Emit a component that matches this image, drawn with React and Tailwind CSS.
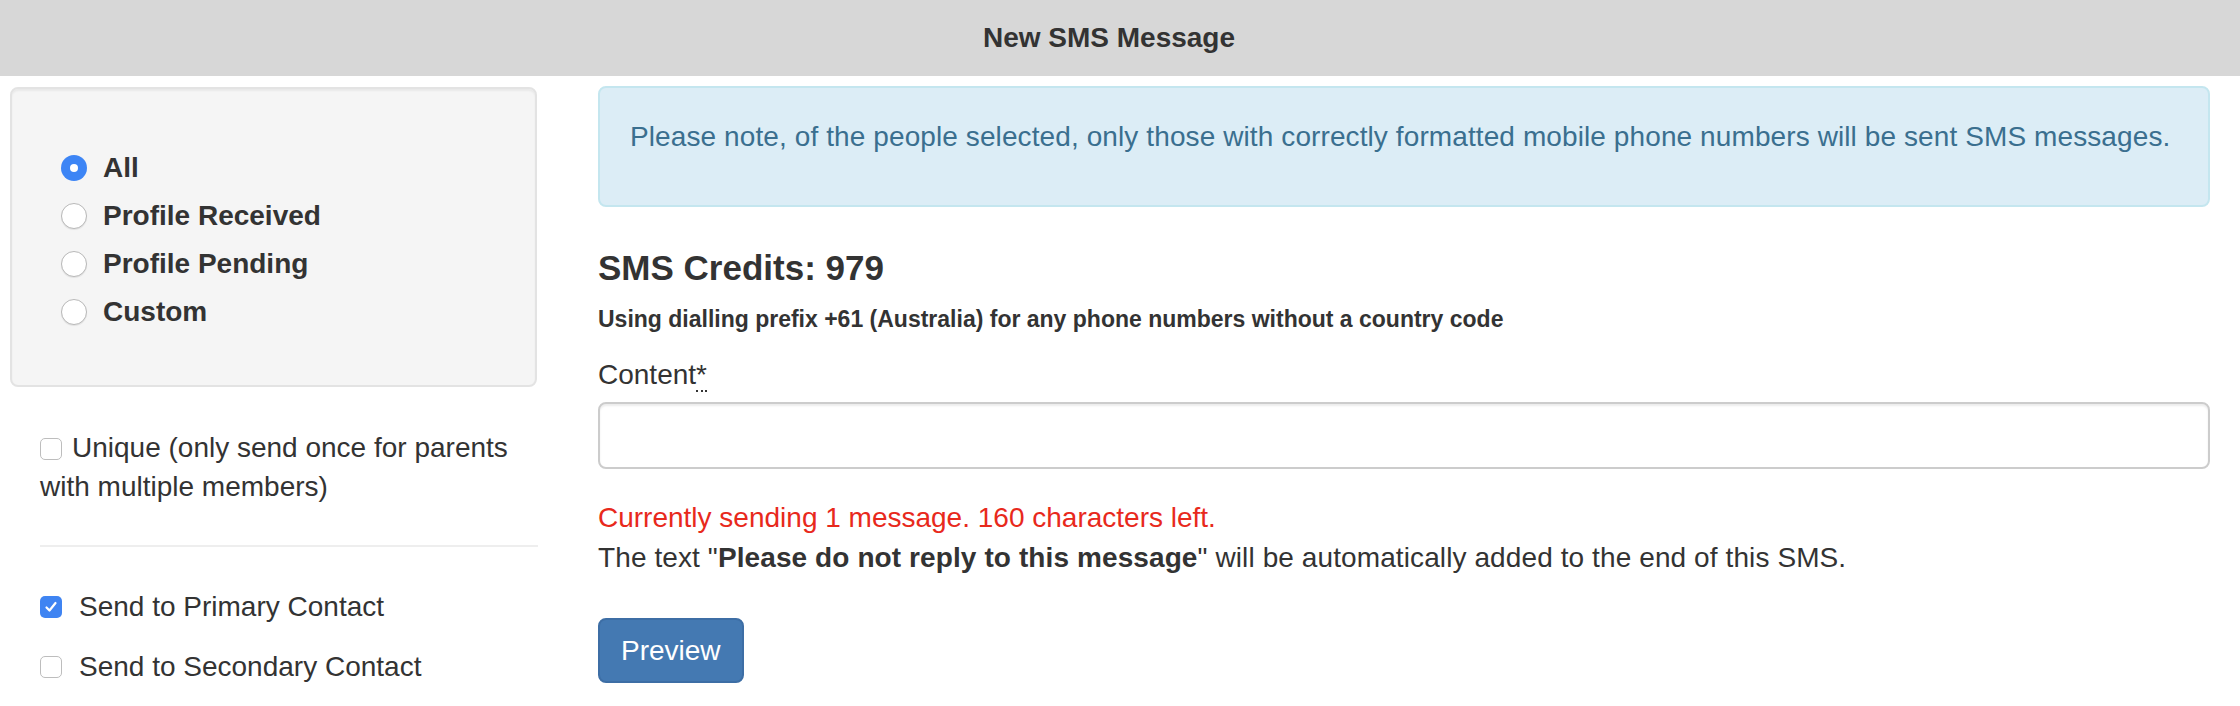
import React from "react";

const font = { fontFamily: '"Liberation Sans", Arial, sans-serif' };

export default function App() {
  return (
    <div className="w-[2240px] h-[706px] bg-white text-[#333] overflow-hidden" style={font}>
      {/* ======================
          HEADER
      ====================== */}
      <div className="h-[76px] bg-[#d7d7d7] flex items-center justify-center pr-[22px]">
        <h1 className="text-[28px] font-bold leading-[40px]">New SMS Message</h1>
      </div>

      <div className="flex pt-[10px]">
        {/* ======================
            LEFT COLUMN
        ====================== */}
        <div className="w-[538px] shrink-0">
          <div className="ml-[10px] mt-[1px] w-[527px] h-[300px] bg-[#f5f5f5] border-2 border-[#e3e3e3] rounded-[8px] shadow-[inset_0_2px_2px_rgba(0,0,0,0.05)] pt-[59px] pl-[49px] flex flex-col gap-[8px]">
            <RadioRow label="All" checked />
            <RadioRow label="Profile Received" />
            <RadioRow label="Profile Pending" />
            <RadioRow label="Custom" />
          </div>

          <div className="pl-[40px] mt-[41px]">
            <p className="text-[28px] leading-[39px]">
              <span className="inline-block align-[-3px] mr-[10px]">
                <Checkbox />
              </span>
              Unique (only send once for parents with multiple members)
            </p>
            <div className="mt-[39px] h-[2px] bg-[#eee]" />
            <div className="mt-[40px] flex flex-col gap-[20px]">
              <CheckRow label="Send to Primary Contact" checked />
              <CheckRow label="Send to Secondary Contact" />
            </div>
          </div>
        </div>

        {/* ======================
            RIGHT COLUMN
        ====================== */}
        <div className="ml-[60px] w-[1612px] shrink-0">
          <div className="h-[121px] bg-[#dcedf6] border-2 border-[#c4e6ef] rounded-[8px] pt-[29px] px-[30px] text-[#3a6f8f] text-[28px] leading-[40px] tracking-[0.1px]">
            Please note, of the people selected, only those with correctly formatted mobile phone numbers will be sent SMS messages.
          </div>

          <h4 className="mt-[41px] text-[35px] font-bold leading-[40px]">SMS Credits: 979</h4>
          <p className="mt-[15px] text-[23px] font-bold leading-[32px]">
            Using dialling prefix +61 (Australia) for any phone numbers without a country code
          </p>

          <label className="block mt-[20px] text-[28px] leading-[40px]">
            Content
            <abbr title="required" className="no-underline border-b-2 border-dotted border-[#333]">*</abbr>
          </label>
          <div className="mt-[7px] h-[67px] border-2 border-[#ccc] rounded-[8px] shadow-[inset_0_2px_2px_rgba(0,0,0,0.075)]" />

          <p className="mt-[29px] text-[28px] leading-[40px] text-[#e8291c]">
            Currently sending 1 message. 160 characters left.
          </p>
          <p className="text-[28px] leading-[40px] tracking-[0.1px]">
            The text "<span className="font-bold">Please do not reply to this message</span>" will be automatically added to the end of this SMS.
          </p>

          <button className="mt-[40px] h-[65px] px-[21px] bg-[#4479b2] border-2 border-[#3d6ea5] rounded-[8px] text-white text-[28px] leading-[40px]">
            Preview
          </button>
        </div>
      </div>
    </div>
  );
}

/* ======================
   RADIO
====================== */
function RadioRow({ label, checked }) {
  return (
    <div className="flex items-center h-[40px]">
      {checked ? (
        <span className="w-[26px] h-[26px] rounded-full bg-[#3d85f5] flex items-center justify-center">
          <span className="w-[8px] h-[8px] rounded-full bg-white" />
        </span>
      ) : (
        <span className="w-[26px] h-[26px] rounded-full bg-white border-[1.5px] border-[#b8b8b8] shadow-[0_1px_1px_rgba(0,0,0,0.08)]" />
      )}
      <span className="ml-[16px] text-[28px] font-bold">{label}</span>
    </div>
  );
}

/* ======================
   CHECKBOX
====================== */
function Checkbox({ checked }) {
  if (checked) {
    return (
      <span className="w-[22px] h-[22px] rounded-[5px] bg-[#3f84f2] flex items-center justify-center">
        <svg width="14" height="14" viewBox="0 0 14 14" fill="none">
          <path d="M2.5 7.5 L5.5 10.5 L11.5 3" stroke="white" strokeWidth="2.2" strokeLinecap="round" strokeLinejoin="round" />
        </svg>
      </span>
    );
  }
  return <span className="block w-[22px] h-[22px] rounded-[5px] bg-white border-[1.5px] border-[#bdbdbd]" />;
}

function CheckRow({ label, checked }) {
  return (
    <div className="flex items-center h-[40px] text-[28px]">
      <Checkbox checked={checked} />
      <span className="ml-[17px]">{label}</span>
    </div>
  );
}
